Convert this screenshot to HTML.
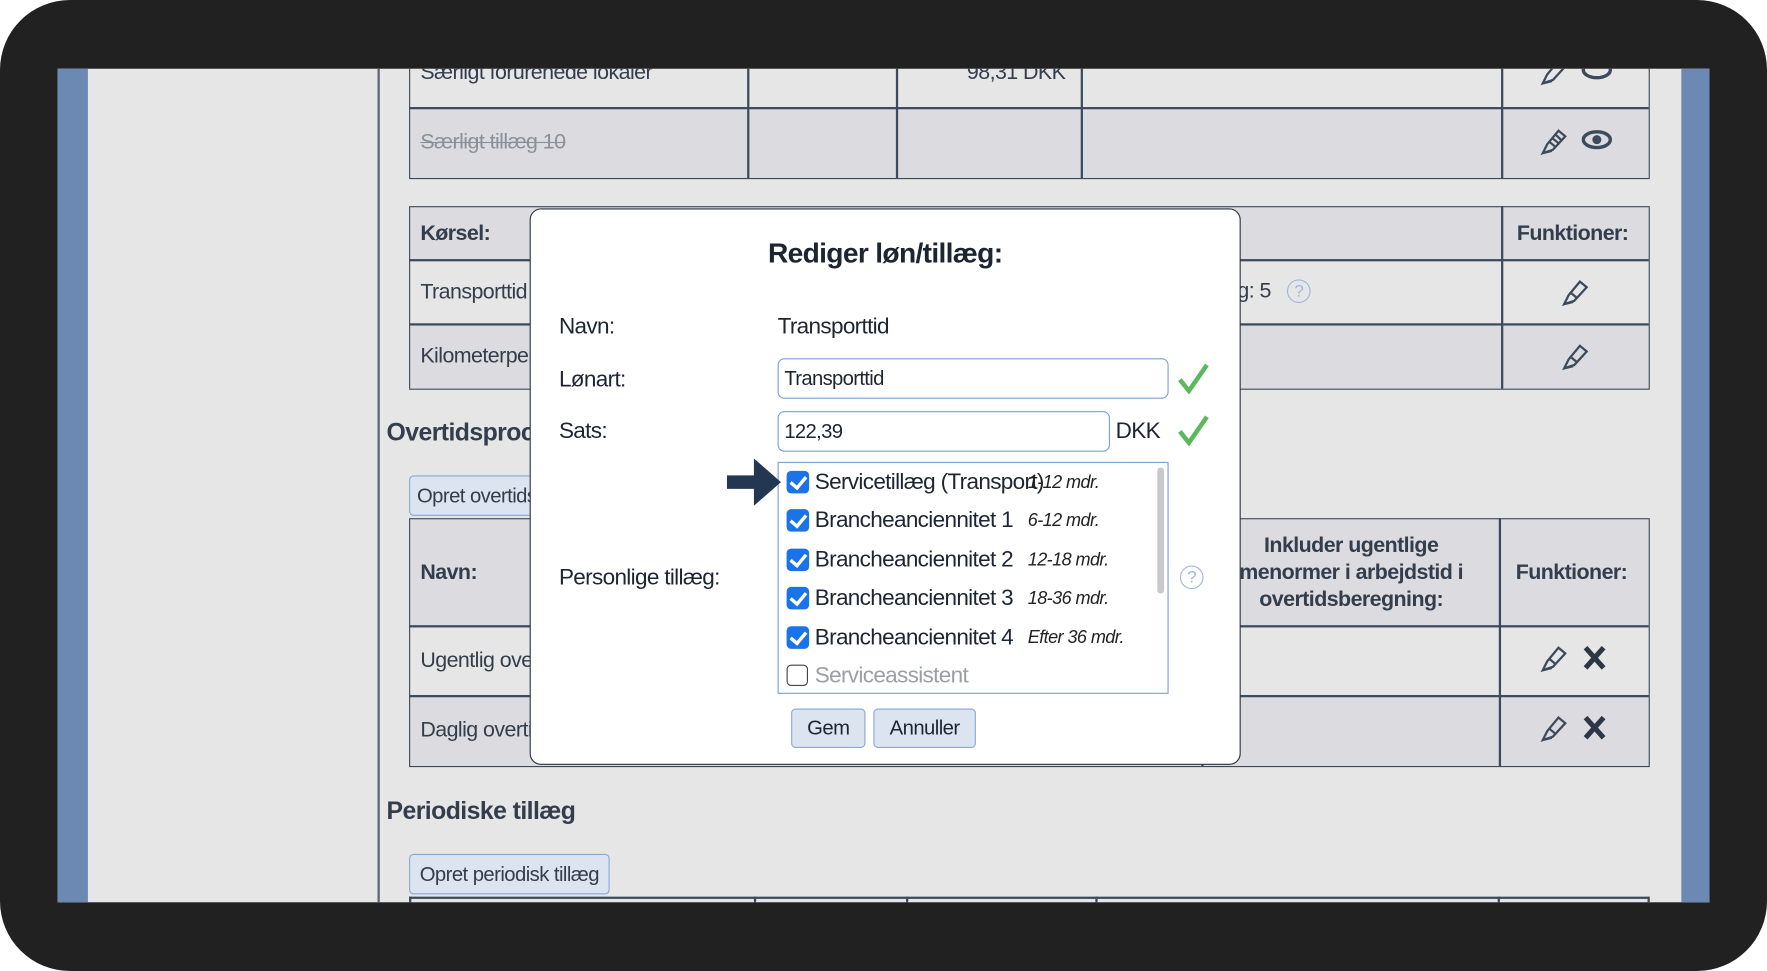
<!DOCTYPE html>
<html><head><meta charset="utf-8"><style>
html,body{margin:0;padding:0;width:1767px;height:971px;overflow:hidden;background:#fff}
#w{position:absolute;left:0;top:0;width:1568px;height:862px;transform:scale(1.12691,1.12645);transform-origin:0 0;font-family:"Liberation Sans",sans-serif;color:#333d4b;letter-spacing:-0.5px}
.a{position:absolute}
.bez{left:0;top:0;width:1568px;height:862px;background:#222122;border-radius:62px}
.scr{left:51px;top:61px;width:1466px;height:740px;background:#e6e6e6;overflow:hidden}
.t{position:absolute;font-size:19px;white-space:nowrap}
.b{font-weight:bold}
.ln{position:absolute;background:#3c4a5c}
.cell{position:absolute;border:1.5px solid #3c4a5c;box-sizing:border-box}
.btn{position:absolute;border:1.5px solid #8aa8d6;border-radius:4px;background:#dbe4ef;font-size:18px;box-sizing:border-box;text-align:center;white-space:nowrap;overflow:hidden}
.cb{position:absolute;width:20px;height:20px;border-radius:4px;background:#1a73e8}
.cb::after{content:"";position:absolute;left:6px;top:2px;width:6px;height:11px;border:solid #fff;border-width:0 3px 3px 0;transform:rotate(40deg)}
.it{position:absolute;font-size:16px;font-style:italic;color:#222;white-space:nowrap}
.mt{position:absolute;font-size:20px;color:#1d2533;white-space:nowrap;letter-spacing:-0.6px}
</style></head><body><div id="w">
<div class="a bez"></div>
<div class="a scr">
 <div class="a" style="left:0;top:0;width:27px;height:740px;background:#6b89b3"></div>
 <div class="a" style="left:1441px;top:0;width:25px;height:740px;background:#6b89b3"></div>
 <div class="a" style="left:284px;top:0;width:1.5px;height:740px;background:#5a6473"></div>
</div>
<div class="a" style="left:51px;top:61px;width:1466px;height:740px;overflow:hidden">
<div class="a" style="left:-51px;top:-61px;width:1568px;height:862px">
 <div class="a" style="left:363px;top:96px;width:1100px;height:62px;background:#dcdce0"></div>
 <div class="cell" style="left:363px;top:40px;width:1101px;height:119px"></div>
 <div class="ln" style="left:363px;top:95px;width:1100px;height:1.5px"></div>
 <div class="ln" style="left:663px;top:40px;width:1.5px;height:118px"></div>
 <div class="ln" style="left:795px;top:40px;width:1.5px;height:118px"></div>
 <div class="ln" style="left:959px;top:40px;width:1.5px;height:118px"></div>
 <div class="ln" style="left:1332px;top:40px;width:1.5px;height:118px"></div>
 <div class="t" style="left:373px;top:54px">Særligt forurenede lokaler</div>
 <div class="t" style="left:858px;top:54px">98,31 DKK</div>
 <div class="t" style="left:373px;top:116px;color:#8a9099;text-decoration:line-through">Særligt tillæg 10</div>
 <svg class="a" style="left:1365px;top:112px" width="70" height="28" viewBox="0 0 70 28"><path d="M4 24 L8 16 L18 4 L24 9 L13 21 Z M4 24 L12 22 M10 14 L16 19 M13 11 L19 16 M16 8 L21 13" fill="none" stroke="#3c4a5c" stroke-width="2"/><ellipse cx="52" cy="12" rx="12" ry="7" fill="none" stroke="#3c4a5c" stroke-width="3"/><circle cx="52" cy="12" r="4" fill="#3c4a5c"/></svg>
 <svg class="a" style="left:1365px;top:50px" width="70" height="28" viewBox="0 0 70 28"><path d="M4 24 L8 16 L18 4 L24 9 L13 21 Z M4 24 L12 22" fill="none" stroke="#3c4a5c" stroke-width="2"/><ellipse cx="52" cy="12" rx="12" ry="7" fill="none" stroke="#3c4a5c" stroke-width="3"/></svg>
 <div class="a" style="left:363px;top:183px;width:1100px;height:48px;background:#dcdce0"></div>
 <div class="a" style="left:363px;top:288px;width:1100px;height:57px;background:#dcdce0"></div>
 <div class="cell" style="left:363px;top:183px;width:1101px;height:163px"></div>
 <div class="ln" style="left:363px;top:230px;width:1100px;height:1.5px"></div>
 <div class="ln" style="left:363px;top:287px;width:1100px;height:1.5px"></div>
 <div class="ln" style="left:1332px;top:183px;width:1.5px;height:162px"></div>
 <div class="t b" style="left:373px;top:197px">Kørsel:</div>
 <div class="t b" style="left:1346px;top:197px">Funktioner:</div>
 <div class="t" style="left:373px;top:249px">Transporttid</div>
 <div class="t" style="left:373px;top:306px">Kilometerpenge</div>
 <div class="t" style="left:1098px;top:248px">g: 5</div>
 <div class="a" style="left:1142px;top:248px;width:19px;height:19px;border:1.5px solid #9fb7de;border-radius:50%;color:#9fb7de;font-size:15px;text-align:center;line-height:19px">?</div>
 <svg class="a" style="left:1384px;top:246px" width="30" height="28"><path d="M4 24 L8 16 L18 4 L24 9 L13 21 Z M4 24 L12 22 M10 14 L16 19" fill="none" stroke="#3c4a5c" stroke-width="2"/></svg>
 <svg class="a" style="left:1384px;top:303px" width="30" height="28"><path d="M4 24 L8 16 L18 4 L24 9 L13 21 Z M4 24 L12 22 M10 14 L16 19" fill="none" stroke="#3c4a5c" stroke-width="2"/></svg>
 <div class="t b" style="left:343px;top:371px;font-size:22px">Overtidsprocenter</div>
 <div class="btn" style="left:363px;top:422px;width:180px;height:36px;text-align:left;padding:7px 6px">Opret overtidsprocent</div>
 <div class="a" style="left:363px;top:460px;width:1100px;height:96px;background:#dcdce0"></div>
 <div class="a" style="left:363px;top:618px;width:1100px;height:62px;background:#dcdce0"></div>
 <div class="cell" style="left:363px;top:460px;width:1101px;height:221px"></div>
 <div class="ln" style="left:363px;top:555px;width:1100px;height:1.5px"></div>
 <div class="ln" style="left:363px;top:617px;width:1100px;height:1.5px"></div>
 <div class="ln" style="left:1330px;top:460px;width:1.5px;height:220px"></div>
 <div class="ln" style="left:1066px;top:460px;width:1.5px;height:220px"></div>
 <div class="t b" style="left:373px;top:498px">Navn:</div>
 <div class="t b" style="left:1345px;top:498px">Funktioner:</div>
 <div class="t b" style="left:1070px;top:473px;width:258px;text-align:center;line-height:24px;white-space:normal">Inkluder ugentlige<br>menormer i arbejdstid i<br>overtidsberegning:</div>
 <div class="t" style="left:373px;top:576px">Ugentlig overtid</div>
 <div class="t" style="left:373px;top:638px">Daglig overtid</div>
 <svg class="a" style="left:1365px;top:571px" width="70" height="28"><path d="M4 24 L8 16 L18 4 L24 9 L13 21 Z M4 24 L12 22 M10 14 L16 19" fill="none" stroke="#3c4a5c" stroke-width="2"/><path d="M42 4 L58 22 M58 4 L42 22" stroke="#2d3644" stroke-width="4.5"/></svg>
 <svg class="a" style="left:1365px;top:633px" width="70" height="28"><path d="M4 24 L8 16 L18 4 L24 9 L13 21 Z M4 24 L12 22 M10 14 L16 19" fill="none" stroke="#3c4a5c" stroke-width="2"/><path d="M42 4 L58 22 M58 4 L42 22" stroke="#2d3644" stroke-width="4.5"/></svg>
 <div class="t b" style="left:343px;top:707px;font-size:22px">Periodiske tillæg</div>
 <div class="btn" style="left:363px;top:758px;width:178px;height:36px;padding-top:7px">Opret periodisk tillæg</div>
 <div class="ln" style="left:363px;top:796px;width:1100px;height:1.5px"></div>
 <div class="ln" style="left:363px;top:796px;width:1.5px;height:10px"></div>
 <div class="ln" style="left:669px;top:796px;width:1.5px;height:10px"></div>
 <div class="ln" style="left:804px;top:796px;width:1.5px;height:10px"></div>
 <div class="ln" style="left:972px;top:796px;width:1.5px;height:10px"></div>
 <div class="ln" style="left:1329px;top:796px;width:1.5px;height:10px"></div>
 <div class="ln" style="left:1462px;top:796px;width:1.5px;height:10px"></div>
</div></div>
<div class="a" style="left:470px;top:185px;width:631px;height:494px;background:#fff;border:1.5px solid #2b3340;border-radius:10px;box-sizing:border-box"></div>
<div class="mt b" style="left:471px;top:211px;width:629px;text-align:center;font-size:25px">Rediger løn/tillæg:</div>
<div class="mt" style="left:496px;top:279px">Navn:</div>
<div class="mt" style="left:690px;top:279px">Transporttid</div>
<div class="mt" style="left:496px;top:326px">Lønart:</div>
<div class="a" style="left:690px;top:318px;width:347px;height:36px;border:1.5px solid #7c9fd8;border-radius:6px;box-sizing:border-box"></div>
<div class="mt" style="left:696px;top:326px;font-size:18px">Transporttid</div>
<div class="mt" style="left:496px;top:372px">Sats:</div>
<div class="a" style="left:690px;top:365px;width:295px;height:36px;border:1.5px solid #7c9fd8;border-radius:6px;box-sizing:border-box"></div>
<div class="mt" style="left:696px;top:373px;font-size:18px">122,39</div>
<div class="mt" style="left:990px;top:372px">DKK</div>
<svg class="a" style="left:1044px;top:321px" width="30" height="30"><path d="M3 16 L11 26 L27 3" fill="none" stroke="#5cb85c" stroke-width="4"/></svg>
<svg class="a" style="left:1044px;top:367px" width="30" height="30"><path d="M3 16 L11 26 L27 3" fill="none" stroke="#5cb85c" stroke-width="4"/></svg>
<div class="mt" style="left:496px;top:502px">Personlige tillæg:</div>
<div class="a" style="left:1047px;top:502px;width:19px;height:19px;border:1.5px solid #9fb7de;border-radius:50%;color:#9fb7de;font-size:15px;text-align:center;line-height:19px">?</div>
<div class="a" style="left:690px;top:410px;width:347px;height:206px;border:1.5px solid #7c9fd8;box-sizing:border-box"></div>
<div class="a" style="left:1027px;top:415px;width:6px;height:112px;background:#c9c9c9;border-radius:3px"></div>
<svg class="a" style="left:645px;top:407px" width="50" height="42"><path d="M0 15 H24 V0 L48 21 L24 42 V27 H0 Z" fill="#243752"/></svg>
<div class="cb" style="left:698px;top:418px"></div><div class="mt" style="left:723px;top:417px">Servicetillæg (Transport)</div><div class="it" style="left:912px;top:420px">1-12 mdr.</div>
<div class="cb" style="left:698px;top:452px"></div><div class="mt" style="left:723px;top:451px">Brancheanciennitet 1</div><div class="it" style="left:912px;top:454px">6-12 mdr.</div>
<div class="cb" style="left:698px;top:487px"></div><div class="mt" style="left:723px;top:486px">Brancheanciennitet 2</div><div class="it" style="left:912px;top:489px">12-18 mdr.</div>
<div class="cb" style="left:698px;top:521px"></div><div class="mt" style="left:723px;top:520px">Brancheanciennitet 3</div><div class="it" style="left:912px;top:523px">18-36 mdr.</div>
<div class="cb" style="left:698px;top:556px"></div><div class="mt" style="left:723px;top:555px">Brancheanciennitet 4</div><div class="it" style="left:912px;top:558px">Efter 36 mdr.</div>
<div class="a" style="left:698px;top:590px;width:17px;height:17px;border:1.5px solid #444;border-radius:4px"></div><div class="mt" style="left:723px;top:589px;color:#9a9fa6">Serviceassistent</div>
<div class="btn" style="left:702px;top:629px;width:66px;height:35px;padding-top:6px;color:#1d2533">Gem</div>
<div class="btn" style="left:775px;top:629px;width:91px;height:35px;padding-top:6px;color:#1d2533">Annuller</div>
</div></body></html>
